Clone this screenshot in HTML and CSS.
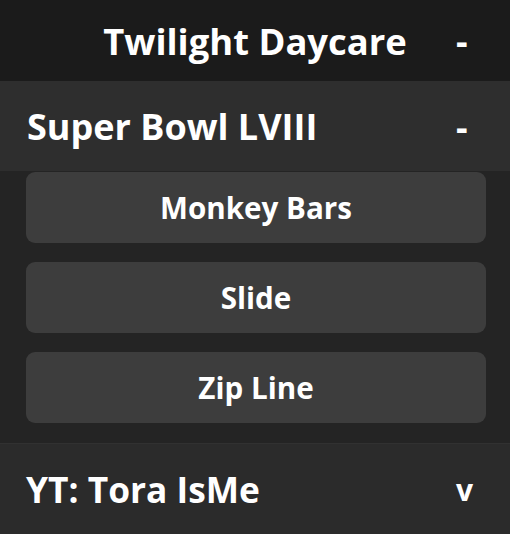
FILE: index.html
```html
<!DOCTYPE html>
<html>
<head>
<meta charset="utf-8">
<link rel="stylesheet" href="styles.css">
</head>
<body>
<div class="panel">
  <div class="top">
    <div class="title">Twilight Daycare</div>
    <div class="toggle">-</div>
  </div>
  <div class="section">
    <div class="section-title">Super Bowl LVIII</div>
    <div class="toggle">-</div>
  </div>
  <div class="content">
    <div class="btn">Monkey Bars</div>
    <div class="btn">Slide</div>
    <div class="btn">Zip Line</div>
  </div>
  <div class="bottom">
    <div class="section-title">YT: Tora IsMe</div>
    <div class="toggle small">v</div>
  </div>
</div>
</body>
</html>
```
FILE: styles.css
```css
html, body {
  margin: 0;
  padding: 0;
  background: #242424;
}
.panel {
  width: 510px;
  height: 534px;
  display: flex;
  flex-direction: column;
  font-family: "Open Sans", "Noto Sans", sans-serif;
  font-weight: 700;
  color: #ffffff;
  overflow: hidden;
}
.top {
  height: 81px;
  background: #1b1b1b;
  display: flex;
  align-items: center;
  padding-left: 60px;
}
.title {
  flex: 1;
  text-align: center;
  font-size: 36.4px;
}
.toggle {
  width: 54px;
  font-size: 36px;
  padding-left: 6px;
}
.toggle.small {
  font-size: 30px;
}
.section {
  height: 90px;
  background: #2e2e2e;
  display: flex;
  align-items: center;
  padding-left: 27px;
}
.section-title {
  flex: 1;
  font-size: 36px;
}
.bottom .section-title {
  font-size: 35.3px;
}
.content {
  display: flex;
  flex-direction: column;
  gap: 19px;
  padding: 1px 24px 20px 26px;
}
.btn {
  height: 71px;
  border-radius: 9px;
  background: #3d3d3d;
  display: flex;
  align-items: center;
  justify-content: center;
  font-size: 29.6px;
}
.bottom {
  flex: 1;
  background: #2b2b2b;
  border-top: 1px solid #313131;
  display: flex;
  align-items: center;
  padding-left: 26px;
}
```
